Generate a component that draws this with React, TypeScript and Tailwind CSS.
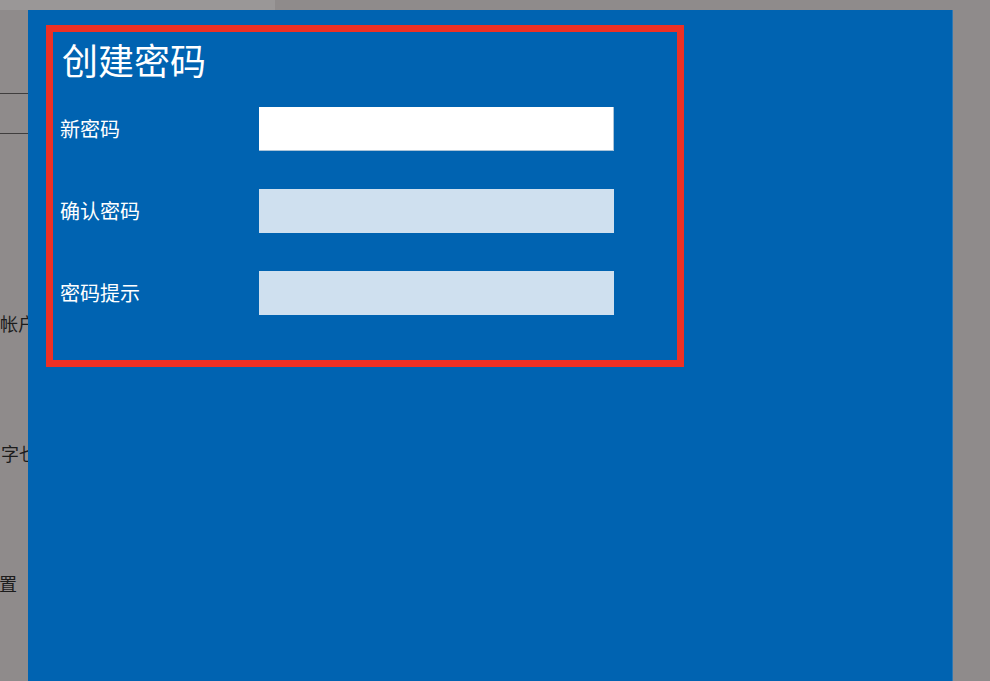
import React from "react";

const FIELDS = [
  { label: "新密码", focused: true },
  { label: "确认密码", focused: false },
  { label: "密码提示", focused: false },
];

const CJK = { fontFamily: '"Noto Sans CJK SC", "Noto Sans", sans-serif' };

function Sidebar() {
  return (
    <div className="w-[28px] shrink-0 flex flex-col overflow-hidden bg-[#8f8b8b]">
      <div className="h-[10px] bg-[#9a9797]" />
      <div className="mt-[83px] h-px bg-[#3f3d3d]" />
      <div className="mt-[39px] h-px bg-[#3f3d3d]" />
      <div className="mt-[177px] h-[24px] leading-[24px] text-[18px] text-[#1c1c1c] whitespace-nowrap">帐户</div>
      <div className="mt-[106px] h-[24px] leading-[24px] text-[18px] text-[#1c1c1c] whitespace-nowrap pl-[1px]">字乜</div>
      <div className="mt-[106px] h-[24px] leading-[24px] text-[18px] text-[#1c1c1c] whitespace-nowrap -ml-[1px]">置</div>
    </div>
  );
}

export default function App() {
  return (
    <div className="w-[990px] h-[681px] flex overflow-hidden bg-[#8f8b8b]" style={CJK}>
      <Sidebar />

      {/* dialog column */}
      <div className="w-[925px] shrink-0 flex flex-col">
        <div className="h-[10px] flex">
          <div className="w-[247px] bg-[#9a9797]" />
        </div>

        <div className="flex-1 bg-[#0063b1] border-r border-[#2f78b3] pl-[18px] pt-[15px]">
          <div className="w-[638px] h-[342px] border-[7px] border-[#ee3024] pl-[7px] pt-[5px]">
            <h1 className="ml-[2px] text-[36px] leading-[44px] font-normal text-white">创建密码</h1>

            <div className="mt-[26px] flex flex-col gap-[38px]">
              {FIELDS.map((f) => (
                <div key={f.label} className="flex items-center">
                  <span className="w-[199px] text-[20px] leading-[24px] text-white">{f.label}</span>
                  <div
                    className={
                      f.focused
                        ? "w-[355px] h-[44px] bg-white border-b border-r border-[#a9c3d8]"
                        : "w-[355px] h-[44px] bg-[#cfe0ef]"
                    }
                  />
                </div>
              ))}
            </div>
          </div>
        </div>
      </div>

      <div className="flex-1 bg-[#8f8b8b]" />
    </div>
  );
}
